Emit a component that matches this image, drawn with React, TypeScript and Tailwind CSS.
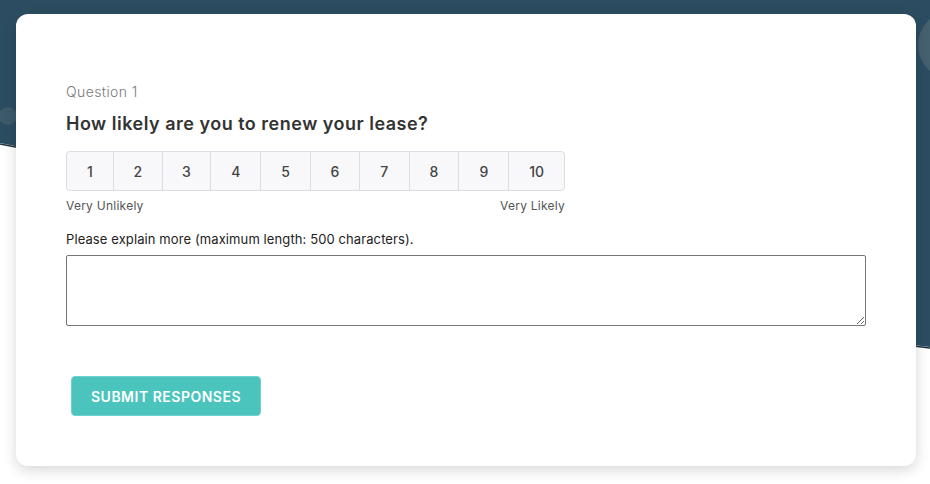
const scale = [
  { n: 1, w: 46 },
  { n: 2, w: 49 },
  { n: 3, w: 49 },
  { n: 4, w: 50 },
  { n: 5, w: 50 },
  { n: 6, w: 49 },
  { n: 7, w: 50 },
  { n: 8, w: 50 },
  { n: 9, w: 50 },
  { n: 10, w: 56 },
];

function Backdrop() {
  return (
    <svg className="absolute inset-0 h-full w-full" viewBox="0 0 930 484" preserveAspectRatio="none">
      <path d="M0 0 H930 V347 C700 320 300 200 0 143 Z" fill="#2c4d61" />
      <path d="M0 144 C300 201 700 321 930 348" fill="none" stroke="#1d2f3a" strokeWidth="1.5" />
      <circle cx="8" cy="116" r="9" fill="#3c5a6c" />
      <circle cx="952" cy="45" r="34" fill="#45606f" />
    </svg>
  );
}

export default function App() {
  return (
    <div className="relative h-[484px] w-full overflow-hidden bg-white font-['Inter',sans-serif]">
      <Backdrop />
      <div className="relative ml-[16px] mt-[14px] h-[452px] w-[900px] rounded-xl bg-white pl-[50px] pt-[68px] shadow-[0_4px_14px_rgba(0,0,0,0.16)]">
        <p className="text-[14px] leading-5 font-light tracking-[0.4px] text-[#7a7a7a]">Question 1</p>
        <h2 className="mt-[10px] text-[18px] leading-6 font-semibold tracking-[0.5px] text-[#333]">
          How likely are you to renew your lease?
        </h2>

        <div className="mt-[15px] w-[499px]">
          <div className="flex h-[40px] overflow-hidden rounded-[4px] border border-[#dcdce4] bg-[#f8f8fa]">
            {scale.map((s, i) => (
              <button
                key={s.n}
                style={{ width: s.w }}
                className={
                  "flex items-center justify-center text-[14px] font-medium text-[#444] " +
                  (i > 0 ? "border-l border-[#dcdce4]" : "")
                }
              >
                {s.n}
              </button>
            ))}
          </div>
          <div className="mt-[7px] flex justify-between text-[12px] leading-4 tracking-[0.25px] text-[#555]">
            <span>Very Unlikely</span>
            <span>Very Likely</span>
          </div>
        </div>

        <p className="mt-[17px] text-[13px] leading-4 tracking-[0.1px] text-[#222]">
          Please explain more (maximum length: 500 characters).
        </p>
        <textarea className="mt-[8px] block h-[71px] w-[800px] rounded-[2px] border border-[#767676] bg-white" />

        <button className="ml-[5px] mt-[50px] h-[40px] w-[190px] rounded-[4px] border border-[#6fd3cd] bg-[#4ac4bd] text-[14px] font-semibold tracking-[0.5px] text-white">
          SUBMIT RESPONSES
        </button>
      </div>
    </div>
  );
}
